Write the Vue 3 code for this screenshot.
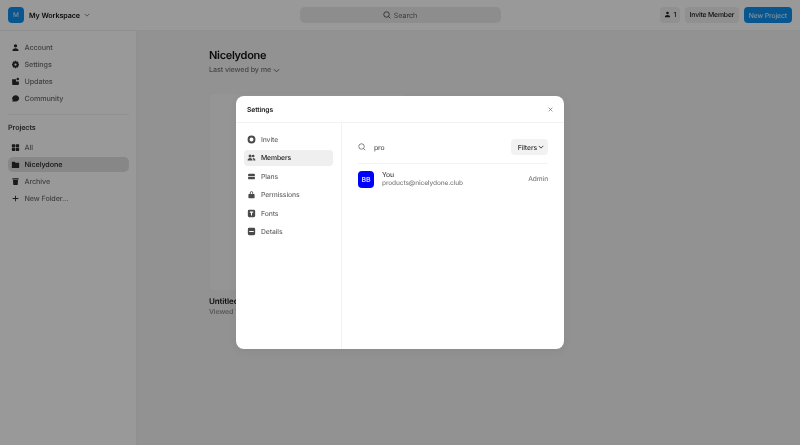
<script setup>
const topNav = [
  { label: 'Account', d: 'M8 2a3 3 0 1 1 0 6 3 3 0 0 1 0-6ZM2.500 14c0-3 2.200-4.800 5.500-4.800s5.500 1.800 5.500 4.800Z' },
  { label: 'Settings', d: 'M6.700 1.500h2.600l.4 1.900 1.700-1 1.900 1.900-1 1.700 1.900.4v3.200l-1.900.4 1 1.700-1.900 1.900-1.700-1-.4 1.900H6.700l-.4-1.900-1.700 1-1.900-1.900 1-1.700-1.900-.4V6.400l1.900-.4-1-1.700 1.900-1.900 1.700 1ZM8 6a2 2 0 1 0 0 4 2 2 0 0 0 0-4Z' },
  { label: 'Updates', d: 'M2 4h7v4h5v4.500a1.500 1.500 0 0 1-1.500 1.500h-9A1.500 1.500 0 0 1 2 12.500ZM12 1.500a2.200 2.200 0 1 1 0 4.400 2.200 2.200 0 0 1 0-4.400Z' },
  { label: 'Community', d: 'M8.500 2c3.200 0 6 2.300 6 5.700s-2.800 5.800-6 5.800H2l1.200-2.400C2.400 10.200 2 9 2 7.700 2 4.300 5.300 2 8.500 2Z' },
]
const projects = [
  { label: 'All', d: 'M1.500 3a1 1 0 0 1 1-1h4a1 1 0 0 1 1 1v3.500a1 1 0 0 1-1 1h-4a1 1 0 0 1-1-1Zm7 0a1 1 0 0 1 1-1h4a1 1 0 0 1 1 1v3.500a1 1 0 0 1-1 1h-4a1 1 0 0 1-1-1Zm-7 6.500a1 1 0 0 1 1-1h4a1 1 0 0 1 1 1V13a1 1 0 0 1-1 1h-4a1 1 0 0 1-1-1Zm7 0a1 1 0 0 1 1-1h4a1 1 0 0 1 1 1V13a1 1 0 0 1-1 1h-4a1 1 0 0 1-1-1Z' },
  { label: 'Nicelydone', active: true, d: 'M1.500 3h5L8 4.800h6.500V14h-13Z' },
  { label: 'Archive', d: 'M2.500 2h11v2.500h-11Zm1 3.500h9l-.6 8.500H4.100Z' },
  { label: 'New Folder...', d: 'M7.200 3h1.600v4.200H13v1.600H8.800V13H7.200V8.800H3V7.200h4.200Z' },
]
const settingsNav = [
  { label: 'Invite', d: 'M8 1a7 7 0 1 1 0 14A7 7 0 0 1 8 1Zm0 3.500a3.500 3.500 0 1 0 0 7 3.500 3.500 0 0 0 0-7Z' },
  { label: 'Members', active: true, d: 'M5.500 2.500a2.700 2.700 0 1 1 0 5.400 2.700 2.700 0 0 1 0-5.400Zm5.500.500a2.300 2.300 0 1 1 0 4.600 2.300 2.300 0 0 1 0-4.600ZM1 13.500C1 10.700 3 9 5.500 9s4.500 1.700 4.500 4.500Zm10.500 0c0-1.800-.5-3.300-1.500-4.300 2.800-.7 5 1.200 5 4.300Z' },
  { label: 'Plans', d: 'M3.500 3h9A1.500 1.500 0 0 1 14 4.500V7H2V4.500A1.500 1.500 0 0 1 3.500 3ZM2 8.500h12v3a1.500 1.500 0 0 1-1.500 1.500h-9A1.500 1.500 0 0 1 2 11.500Z' },
  { label: 'Permissions', d: 'M5 7V5a3 3 0 0 1 6 0v2h1.500a1 1 0 0 1 1 1v5.500a1 1 0 0 1-1 1h-9a1 1 0 0 1-1-1V8a1 1 0 0 1 1-1Zm1.500 0h3V5a1.500 1.500 0 0 0-3 0Z' },
  { label: 'Fonts', d: 'M4 1.500h8A2.500 2.500 0 0 1 14.500 4v8a2.500 2.500 0 0 1-2.500 2.500H4A2.500 2.500 0 0 1 1.500 12V4A2.500 2.500 0 0 1 4 1.500ZM5 4.500v2.200h2v5h2v-5h2V4.500Z' },
  { label: 'Details', d: 'M4 1.500h8A2.500 2.500 0 0 1 14.500 4v8a2.500 2.500 0 0 1-2.500 2.500H4A2.500 2.500 0 0 1 1.500 12V4A2.500 2.500 0 0 1 4 1.500ZM4 7v2h8V7Z' },
]
</script>

<template>
  <div class="page">
    <header class="topbar">
      <div class="workspace">
        <span class="logo">M</span>
        <span class="ws-name">My Workspace</span>
        <svg class="chev" viewBox="0 0 8 8" width="6" height="6"><path d="M1 2.500 4 5.500 7 2.500" fill="none" stroke="#666" stroke-width="1" /></svg>
      </div>
      <div class="search">
        <svg viewBox="0 0 16 16" width="8" height="8"><circle cx="7" cy="7" r="5.500" fill="none" stroke="#444" stroke-width="1.700" /><path d="M11 11l3.500 3.500" stroke="#444" stroke-width="1.700" /></svg>
        <span>Search</span>
      </div>
      <div class="actions">
        <span class="btn count">
          <svg viewBox="0 0 16 16" width="7" height="7"><path d="M8 1.500a3 3 0 1 1 0 6 3 3 0 0 1 0-6ZM2 14c0-3 2.500-5 6-5s6 2 6 5Z" fill="#222" /></svg>
          1
        </span>
        <span class="btn invite">Invite Member</span>
        <span class="btn primary">New Project</span>
      </div>
    </header>

    <div class="body">
      <aside class="sidebar">
        <nav class="nav">
          <div v-for="item in topNav" :key="item.label" class="nav-item">
            <svg viewBox="0 0 16 16" width="9" height="9"><path :d="item.d" fill="#2c2c2c" fill-rule="evenodd" /></svg>
            <span>{{ item.label }}</span>
          </div>
        </nav>
        <div class="rule"></div>
        <div class="section">Projects</div>
        <nav class="nav">
          <div v-for="item in projects" :key="item.label" class="nav-item project" :class="{ active: item.active }">
            <svg viewBox="0 0 16 16" width="9" height="9"><path :d="item.d" fill="#2c2c2c" fill-rule="evenodd" /></svg>
            <span>{{ item.label }}</span>
          </div>
        </nav>
      </aside>

      <main class="main">
        <h1>Nicelydone</h1>
        <div class="sort">
          Last viewed by me
          <svg viewBox="0 0 8 8" width="7" height="7"><path d="M1 2.500 4 5.500 7 2.500" fill="none" stroke="#555" stroke-width="1" /></svg>
        </div>
        <div class="card"></div>
        <div class="card-title">Untitled</div>
        <div class="card-meta">Viewed 1 day ago</div>
      </main>
    </div>

    <div class="overlay">
      <section class="modal">
        <header class="modal-head">
          <span>Settings</span>
          <svg viewBox="0 0 8 8" width="5" height="5"><path d="M1 1 7 7M7 1 1 7" stroke="#777" stroke-width="1.200" /></svg>
        </header>
        <div class="modal-body">
          <nav class="modal-nav">
            <div v-for="item in settingsNav" :key="item.label" class="modal-item" :class="{ active: item.active }">
              <svg viewBox="0 0 16 16" width="9" height="9"><path :d="item.d" fill="#4a4a4a" fill-rule="evenodd" /></svg>
              <span>{{ item.label }}</span>
            </div>
          </nav>
          <div class="panel">
            <div class="filter-row">
              <svg viewBox="0 0 16 16" width="8" height="8"><circle cx="7" cy="7" r="5.500" fill="none" stroke="#444" stroke-width="1.300" /><path d="M11 11l3.500 3.500" stroke="#444" stroke-width="1.300" /></svg>
              <span class="query">pro</span>
              <span class="filters">
                Filters
                <svg viewBox="0 0 8 8" width="6" height="6"><path d="M1 2.500 4 5.500 7 2.500" fill="none" stroke="#333" stroke-width="1.200" /></svg>
              </span>
            </div>
            <div class="member">
              <span class="avatar">BB</span>
              <div class="who">
                <div class="name">You</div>
                <div class="email">products@nicelydone.club</div>
              </div>
              <span class="role">Admin</span>
            </div>
          </div>
        </div>
      </section>
    </div>
  </div>
</template>

<style>
html, body { margin: 0; padding: 0; }
</style>

<style scoped>
.page {
  position: relative;
  width: 800px;
  height: 445px;
  overflow: hidden;
  background: #fff;
  font-family: Inter, "Liberation Sans", sans-serif;
  font-size: 7.200px;
  letter-spacing: -0.1px;
  color: #222;
  display: flex;
  flex-direction: column;
  text-rendering: geometricPrecision;
  filter: blur(0.35px);
}
.topbar {
  height: 31px;
  flex: none;
  box-sizing: border-box;
  padding: 0 8px;
  display: grid;
  grid-template-columns: 1fr 201px 1fr;
  align-items: center;
  background: #fff;
  border-bottom: 1px solid #f0f0f0;
}
.workspace { display: flex; align-items: center; gap: 5px; }
.logo {
  width: 16px;
  height: 16px;
  border-radius: 4px;
  background: #0d8ff0;
  color: #cfe8fa;
  font-size: 6.500px;
  font-weight: 500;
  display: flex;
  align-items: center;
  justify-content: center;
}
.ws-name { font-weight: 600; font-size: 7.200px; color: #111; }
.chev { margin-left: -1px; }
.search {
  height: 15.500px;
  border-radius: 5px;
  background: #ececec;
  display: flex;
  align-items: center;
  justify-content: center;
  gap: 3px;
  color: #666;
  font-size: 7.200px;
}
.actions { display: flex; justify-content: flex-end; gap: 4.500px; }
.btn {
  height: 15.500px;
  padding: 0 4px;
  border-radius: 4px;
  background: #f0f0f0;
  display: flex;
  align-items: center;
  gap: 2px;
  font-size: 6.800px;
  font-weight: 500;
  color: #111;
}
.btn.invite { padding: 0 5px; letter-spacing: -0.15px; }
.btn.primary {
  background: #0d8ff0;
  color: #d4ebfb;
  padding: 0 5px;
  height: 16px;
}
.body { flex: 1; display: flex; min-height: 0; }
.sidebar {
  width: 137px;
  flex: none;
  box-sizing: border-box;
  padding: 7.500px 8px 0;
  background: #fff;
  border-right: 1px solid #f0f0f0;
}
.nav { display: flex; flex-direction: column; }
.nav-item {
  height: 17px;
  display: flex;
  align-items: center;
  gap: 4.500px;
  padding-left: 3px;
  color: #6f6f6f;
  font-weight: 500;
}
.nav-item.project { margin-right: -1px; }
.nav-item.active { background: #e2e2e2; border-radius: 5px; color: #1c1c1c; height: 15px; margin: 1px -1px 1px 0; }
.rule { height: 1px; background: #f0f0f0; margin: 7px -1px 7px 0; }
.section { height: 11px; line-height: 11px; font-weight: 600; color: #3a3a3a; margin-bottom: 6px; }
.main {
  flex: 1;
  background: #f3f3f3;
  padding: 17px 0 0 72px;
}
h1 {
  margin: 0;
  font-size: 11px;
  line-height: 15px;
  font-weight: 600;
  letter-spacing: -0.3px;
  color: #111;
}
.sort {
  margin-top: 1px;
  display: flex;
  align-items: center;
  gap: 2px;
  line-height: 12px;
  color: #777;
  font-weight: 500;
}
.card {
  margin: 18px 0 0 1px;
  width: 196px;
  height: 196px;
  border-radius: 4px;
  background: #f8f8f8;
}
.card-title { margin-top: 6px; font-weight: 600; font-size: 8px; line-height: 10px; color: #111; }
.card-meta { margin-top: 1px; font-size: 7px; line-height: 10px; color: #888; font-weight: 500; }
.overlay {
  position: absolute;
  inset: 0;
  background: rgba(0, 0, 0, 0.4);
}
.modal {
  position: absolute;
  left: 236px;
  top: 96px;
  width: 328px;
  height: 253px;
  border-radius: 8px;
  background: #fff;
  box-shadow: 0 2px 10px rgba(0, 0, 0, 0.06);
  display: flex;
  flex-direction: column;
  overflow: hidden;
}
.modal-head {
  height: 27px;
  flex: none;
  box-sizing: border-box;
  padding: 0 11px;
  border-bottom: 1px solid #f2f2f2;
  display: flex;
  align-items: center;
  justify-content: space-between;
  font-weight: 600;
  font-size: 6.800px;
  color: #222;
}
.modal-body { flex: 1; display: flex; min-height: 0; }
.modal-nav {
  width: 106px;
  flex: none;
  box-sizing: border-box;
  padding: 6.750px 8px 0;
  border-right: 1px solid #f2f2f2;
  display: flex;
  flex-direction: column;
}
.modal-item {
  height: 18.500px;
  display: flex;
  align-items: center;
  gap: 4.800px;
  padding-left: 3.200px;
  color: #6a6a6a;
  font-weight: 500;
  font-size: 6.800px;
}
.modal-item.active {
  height: 16px;
  margin: 1.250px 0;
  background: #efefef;
  border-radius: 4px;
  color: #222;
}
.panel { flex: 1; padding: 16px 16px 0; }
.filter-row {
  height: 25px;
  box-sizing: border-box;
  padding-bottom: 8px;
  border-bottom: 1px solid #f2f2f2;
  display: flex;
  align-items: center;
  gap: 8px;
  font-size: 6.800px;
  font-weight: 500;
}
.query { flex: 1; color: #555; }
.filters {
  height: 16px;
  padding: 0 4px 0 7px;
  border-radius: 4px;
  background: #f2f2f2;
  display: flex;
  align-items: center;
  gap: 1px;
  color: #333;
}
.member { margin-top: 6px; display: flex; align-items: center; gap: 8px; }
.avatar {
  width: 16px;
  height: 17px;
  border-radius: 4px;
  background: #0000ff;
  color: #cfd4ff;
  font-size: 7px;
  font-weight: 600;
  display: flex;
  align-items: center;
  justify-content: center;
}
.who { flex: 1; line-height: 9px; font-size: 6.800px; font-weight: 500; }
.name { color: #444; }
.email { color: #808080; font-size: 6.500px; }
.role { color: #808080; font-size: 6.600px; font-weight: 500; }
</style>
